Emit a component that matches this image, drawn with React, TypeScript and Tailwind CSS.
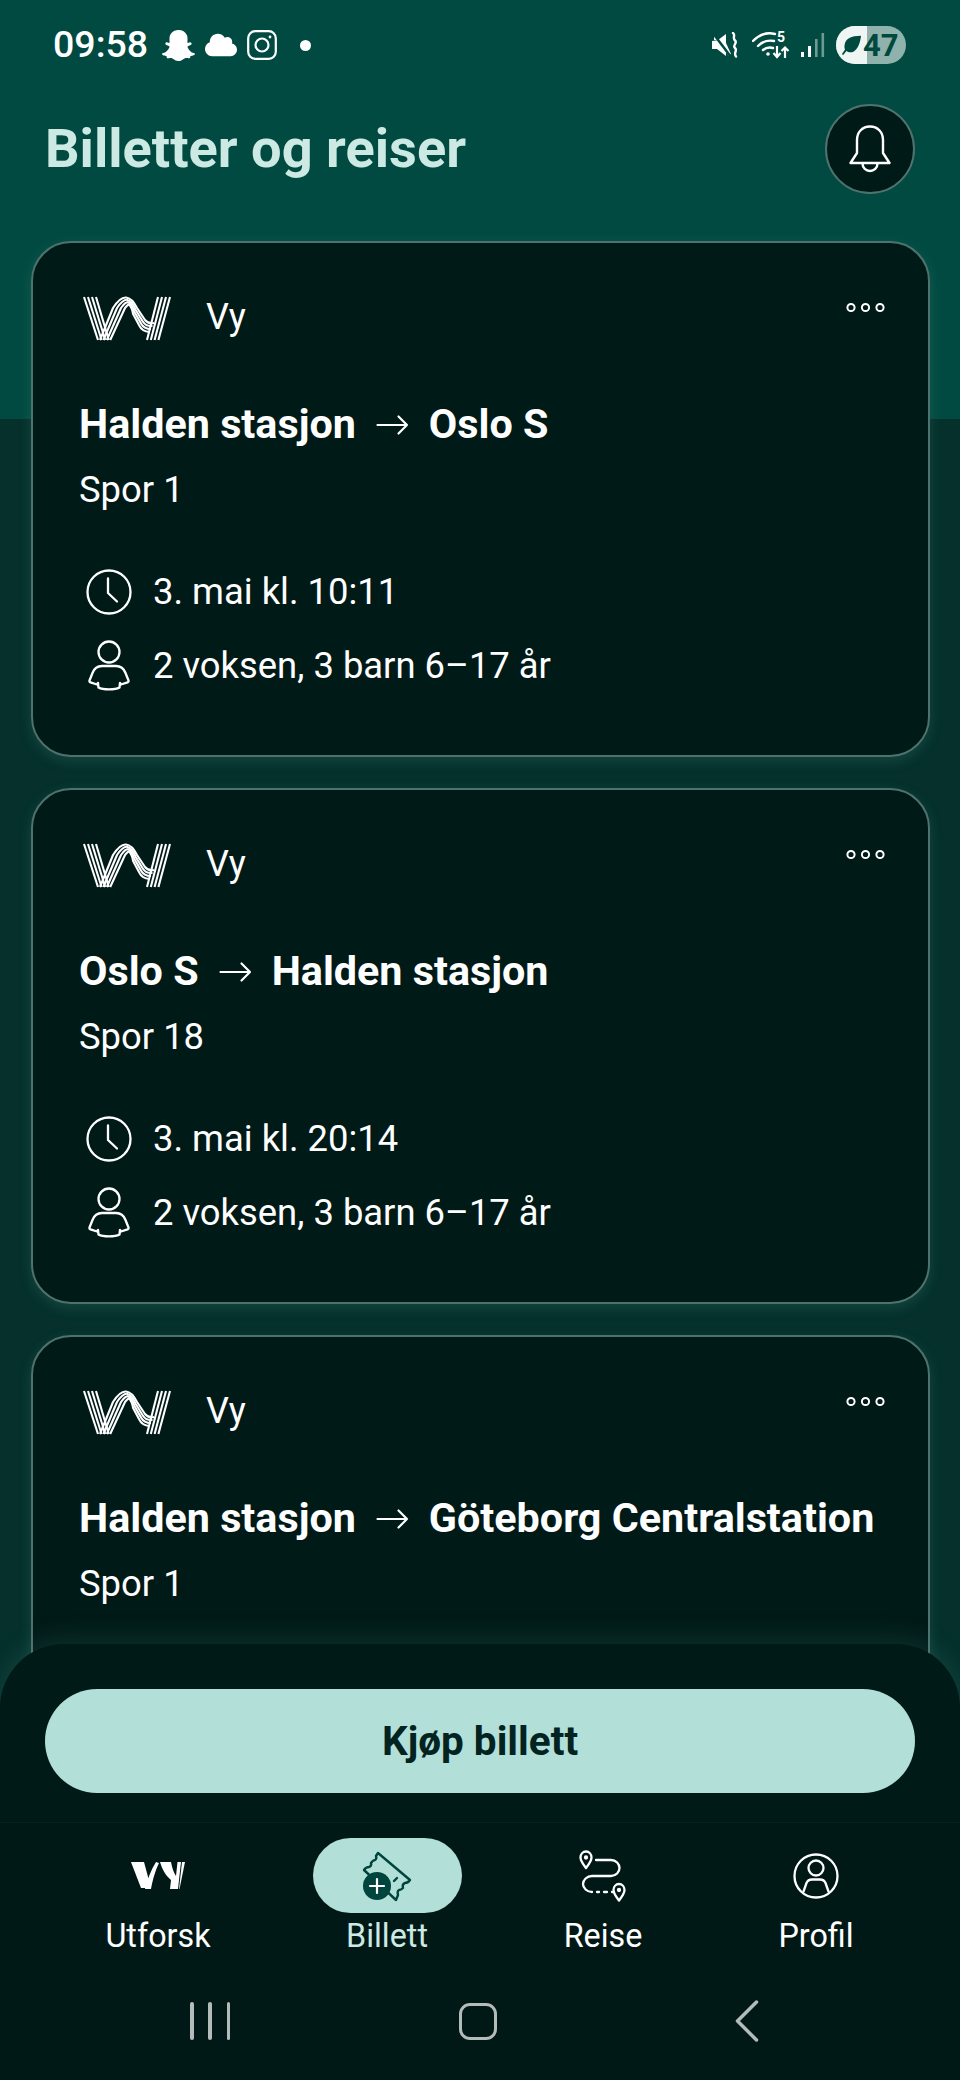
import { FaSnapchatGhost, FaCloud } from "react-icons/fa";

const FONT = "font-['Roboto',sans-serif]";

function VyLogo() {
  const idx = [0, 1, 2, 3];
  return (
    <svg className="ml-[4px]" width="88" height="46" viewBox="0 0 88 46" fill="none" stroke="#fff" strokeWidth="2.1" strokeLinecap="butt" strokeLinejoin="round">
      {idx.map((i) => (
        <path key={`v${i}`} d={`M${1 + 4 * i} 1 L${15 + 3.6 * i} 44`} />
      ))}
      {idx.map((i) => (
        <path key={`w${i}`} d={`M${17 + 3.4 * i} 44 L${30 + 4 * i} 12 Q${37 + 2.7 * i} ${1 + 2.5 * i} ${43 + i} ${1.5 + 2.3 * i} Q${49} ${2 + 3 * i} ${54 - 1.3 * i} ${12 + 2 * i} L${62 - 2 * i} ${24 + 1.7 * i} Q${65 - 2 * i} ${28 + 2.5 * i} ${71 - 1.5 * i} ${27 + 3 * i}`} />
      ))}
      {idx.map((i) => (
        <path key={`y${i}`} d={`M${75 + 4 * i} 1 L${64 + 3.8 * i} 44`} />
      ))}
    </svg>
  );
}

function Clock() {
  return (
    <svg width="46" height="46" viewBox="0 0 46 46" fill="none" stroke="#fff" strokeWidth="2.3" strokeLinecap="round" strokeLinejoin="round">
      <circle cx="23" cy="23" r="21.5" />
      <path d="M22 9.5V24L31 32.5" />
    </svg>
  );
}

function Person() {
  return (
    <svg width="42" height="52" viewBox="0 0 42 52" fill="none" stroke="#fff" strokeWidth="2.3" strokeLinecap="round" strokeLinejoin="round">
      <circle cx="21" cy="12" r="10.5" />
      <path d="M14 26H28C33 26 36 29 37.5 33L40.5 40.5C40.8 41.5 40.4 42 39.5 42.4L33 44.5L32 43L31.5 47.5C27 50 15 50 10.5 47.5L10 43L9 44.5L2.5 42.4C1.6 42 1.2 41.5 1.5 40.5L4.5 33C6 29 9 26 14 26Z" />
    </svg>
  );
}

function Dots() {
  return (
    <svg width="42" height="11" viewBox="0 0 42 11" fill="none" stroke="#fff" strokeWidth="2">
      <circle cx="6" cy="5.5" r="3.6" />
      <circle cx="20.5" cy="5.5" r="3.6" />
      <circle cx="35" cy="5.5" r="3.6" />
    </svg>
  );
}

function Arrow() {
  return (
    <svg width="33" height="22" viewBox="0 0 33 22" fill="none" stroke="#fff" strokeWidth="2.2" strokeLinecap="round" strokeLinejoin="round">
      <path d="M1.5 11H31M22.5 2.5L31 11L22.5 19.5" />
    </svg>
  );
}

function Card({ from, to, track, time }: { from: string; to: string; track: string; time?: string }) {
  return (
    <section className="h-[516px] shrink-0 rounded-[40px] border-2 border-[#4e726d] bg-[#001a18] pl-[46px] pr-[46px] pt-[52px] shadow-[0_4px_14px_rgba(110,190,175,0.16)]">
      <div className="flex h-[48px] items-center">
        <VyLogo />
        <span className="mb-[4px] ml-[35px] text-[36px] leading-none text-white">Vy</span>
        <span className="mb-[24px] ml-auto mr-[-5px]"><Dots /></span>
      </div>
      <div className="mt-[58px] flex h-[48px] items-center whitespace-nowrap text-[41.3px] font-bold leading-none text-white">
        <span>{from}</span>
        <span className="mx-[20px] flex"><Arrow /></span>
        <span>{to}</span>
      </div>
      <div className="mt-[17px] text-[36.4px] leading-[48px] text-white">{track}</div>
      {time && (
        <div className="mt-[53px] flex flex-col gap-[24px]">
          <div className="flex h-[50px] items-center text-[36.4px] text-white">
            <span className="ml-[7px] flex w-[67px]"><Clock /></span>
            {time}
          </div>
          <div className="flex h-[50px] items-center text-[36.4px] text-white">
            <span className="ml-[9px] flex w-[65px]"><Person /></span>
            2 voksen, 3 barn 6–17 år
          </div>
        </div>
      )}
    </section>
  );
}

function NavLogo() {
  return (
    <svg width="54" height="27" viewBox="0 0 54 27" fill="#fff">
      <path d="M0 0H13L20 26H10Z" />
      <path d="M14 27H20C22 16 25 7 28 1L25 0C20 8 16 18 14 27Z" />
      <path d="M29 0H40C41 6 43 11 45 14L46.5 0H50L47 27H39L40 18C35 14 31 7 29 0Z" />
      <path d="M51 0H54L48.5 27H48Z" />
    </svg>
  );
}

function TicketPlus() {
  return (
    <svg width="52" height="52" viewBox="0 0 52 52" fill="none">
      <path d="M17 3L49 30Q47 33 44 33Q41 34 42 38Q40 40 38 40Q36 41 37 45L35 50L3 20Q5 17 8 17Q11 16 10 13Q12 10 14 10Q16 9 15 6Z" stroke="#00453d" strokeWidth="2.4" strokeLinejoin="round" />
      <path d="M33 31L36 28" stroke="#00453d" strokeWidth="2.4" strokeLinecap="round" />
      <circle cx="16" cy="36" r="14" fill="#00453d" />
      <path d="M16 29V43M9 36H23" stroke="#fff" strokeWidth="2.2" strokeLinecap="round" />
    </svg>
  );
}

function RouteIcon() {
  return (
    <svg width="48" height="52" viewBox="0 0 48 52" fill="none" stroke="#fff" strokeWidth="2.3" strokeLinecap="round" strokeLinejoin="round">
      <path d="M7 18C3.5 13.5 1.5 11 1.5 7.5C1.5 4 4 1.5 7 1.5C10 1.5 12.5 4 12.5 7.5C12.5 11 10.5 13.5 7 18Z" />
      <circle cx="7" cy="7.5" r="1" fill="#fff" />
      <path d="M17 10H32C37 10 40.5 14 40.5 18C40.5 22 37 26 32 26H13C8 26 4 30 4 34C4 38 8 42 13 42" />
      <path d="M18 42H20M25 42H28M33 42H35" />
      <path d="M40 50.5C36.5 46 34.5 43.5 34.5 40C34.5 36.5 37 34 40 34C43 34 45.5 36.5 45.5 40C45.5 43.5 43.5 46 40 50.5Z" />
      <circle cx="40" cy="40" r="1" fill="#fff" />
    </svg>
  );
}

function ProfileIcon() {
  return (
    <svg width="46" height="46" viewBox="0 0 46 46" fill="none" stroke="#fff" strokeWidth="2.3" strokeLinecap="round" strokeLinejoin="round">
      <circle cx="23" cy="23" r="21.5" />
      <circle cx="23" cy="15" r="7.5" />
      <path d="M10.5 38.5L13.5 30C14.5 27.5 16.5 26.5 19 26.5H27C29.5 26.5 31.5 27.5 32.5 30L35.5 38.5" />
    </svg>
  );
}

function BellIcon() {
  return (
    <svg width="42" height="48" viewBox="0 0 42 48" fill="none" stroke="#fff" strokeWidth="2.4" strokeLinejoin="round">
      <path d="M1.5 38L8 28V15C8 7 13.5 1.5 21 1.5C28.5 1.5 34 7 34 15V28L40.5 38Z" />
      <path d="M13.5 38.5C13.5 43 17 46 21 46C25 46 28.5 43 28.5 38.5" />
    </svg>
  );
}

function StatusRight() {
  return (
    <div className="flex items-center">
      <svg width="28" height="26" viewBox="0 0 28 26" fill="none">
        <path d="M2 8H6L14 2V11L19 22L16.5 23.5L2 3Z" fill="#fff" />
        <path d="M0 9V17H5L14 24V15L7 8Z" fill="#fff" />
        <path d="M0 0L19 25" stroke="#00493f" strokeWidth="2.5" />
        <path d="M21 1C24 3 20 6 23 8.5C26 11 20 13.5 23 16C26 18.5 21 21 24 24.5" stroke="#fff" strokeWidth="2.4" strokeLinecap="round" />
      </svg>
      <div className="relative ml-[12px] flex">
        <svg width="40" height="28" viewBox="0 0 40 28" fill="none">
          <path d="M1 10C8 3 16 1 23 3M6 15C11 10 17 9 22 10M11 19C14 16.5 18 16 21 17" stroke="#fff" strokeWidth="2.4" strokeLinecap="round" />
          <circle cx="16" cy="23" r="1.8" fill="#fff" />
          <path d="M25 15V25M21.5 22L25 26L28.5 22M33 27V17M29.5 20L33 16.5L36.5 20" stroke="#fff" strokeWidth="2.2" />
        </svg>
        <span className="absolute left-[25px] top-[0px] text-[14px] font-bold leading-[13px] text-white">5</span>
      </div>
      <svg className="ml-[8px]" width="25" height="26" viewBox="0 0 25 26" fill="none">
        <rect x="1" y="20" width="3" height="5" fill="#fff" />
        <rect x="8" y="14" width="3" height="11" fill="#fff" />
        <rect x="15" y="7" width="2.6" height="18" fill="#6f9a93" />
        <rect x="21.5" y="1" width="2.6" height="24" fill="#6f9a93" />
      </svg>
      <div className="relative ml-[11px] flex h-[38px] w-[70px] items-center overflow-hidden rounded-full bg-[#8fb2ac]">
        <span className="absolute inset-y-0 left-0 w-[31px] bg-[#eef5f3]" />
        <svg className="relative ml-[4px] shrink-0" width="22" height="22" viewBox="0 0 24 24" fill="#00493f">
          <path d="M23 2C12 2 6 5 5 12C4.6 14.5 5 16 5.5 17L2 22L3.5 23L7 18.5C9 20 12 20.5 15 19C20 16.5 22 9 23 2Z" />
        </svg>
        <span className="relative ml-[1px] text-[31px] font-bold leading-none text-[#00493f]">47</span>
      </div>
    </div>
  );
}

export default function App() {
  return (
    <div className={`${FONT} relative flex h-[2080px] w-[960px] flex-col overflow-hidden bg-[#05302b]`}>
      <div className="absolute inset-x-0 top-0 h-[419px] bg-[#004a41]" />

      <main className="relative flex min-h-0 flex-1 flex-col overflow-hidden">
        <div className="flex h-[90px] shrink-0 items-center justify-between pl-[53px] pr-[54px]">
          <div className="flex items-center">
            <span className="text-[37.5px] font-medium leading-none text-white">09:58</span>
            <FaSnapchatGhost className="ml-[14px]" color="#fff" size={33} />
            <FaCloud className="ml-[10px]" color="#fff" size={32} />
            <svg className="ml-[10px]" width="30" height="30" viewBox="0 0 30 30" fill="none" stroke="#fff" strokeWidth="2.2">
              <rect x="1.2" y="1.2" width="27.6" height="27.6" rx="7" />
              <circle cx="15" cy="15" r="6.5" />
              <circle cx="23" cy="7" r="1.4" fill="#fff" stroke="none" />
            </svg>
            <span className="ml-[23px] h-[11px] w-[11px] rounded-full bg-white" />
          </div>
          <StatusRight />
        </div>

        <div className="flex h-[90px] shrink-0 items-center justify-between pl-[45px] pr-[45px] pt-[28px]">
          <h1 className="text-[54.2px] font-bold leading-none text-[#cce9e3]">Billetter og reiser</h1>
          <button className="flex h-[90px] w-[90px] items-center justify-center rounded-full border-2 border-[#4e726d] bg-[#001a18]">
            <BellIcon />
          </button>
        </div>

        <div className="ml-[31px] mr-[30px] mt-[61px] flex shrink-0 flex-col gap-[31px]">
          <Card from="Halden stasjon" to="Oslo S" track="Spor 1" time="3. mai kl. 10:11" />
          <Card from="Oslo S" to="Halden stasjon" track="Spor 18" time="3. mai kl. 20:14" />
          <Card from="Halden stasjon" to="Göteborg Centralstation" track="Spor 1" />
        </div>

        <div className="absolute inset-x-0 bottom-0 h-[178px] rounded-t-[64px] bg-[#001a18] px-[45px] pt-[45px] shadow-[0_-6px_24px_rgba(70,150,135,0.18)]">
          <button className="flex h-[104px] w-full items-center justify-center rounded-[52px] bg-[#b2dfd8] text-[40.5px] font-bold text-[#02231f]">
            Kjøp billett
          </button>
        </div>
      </main>

      <nav className="relative h-[258px] shrink-0 border-t border-[#022320] bg-[#001917]">
        <div className="ml-[45px] grid grid-cols-[226px_232px_200px_226px] pt-[15px]">
          <div className="flex flex-col items-center">
            <div className="flex h-[75px] items-center"><NavLogo /></div>
            <span className="mt-[3px] text-[32.3px] leading-[40px] text-white">Utforsk</span>
          </div>
          <div className="flex flex-col items-center">
            <div className="flex h-[75px] w-[149px] items-center justify-center rounded-full bg-[#b2dfd8]"><TicketPlus /></div>
            <span className="mt-[3px] text-[32.3px] leading-[40px] text-[#cce9e3]">Billett</span>
          </div>
          <div className="flex flex-col items-center">
            <div className="flex h-[75px] items-center"><RouteIcon /></div>
            <span className="mt-[3px] text-[32.3px] leading-[40px] text-white">Reise</span>
          </div>
          <div className="flex flex-col items-center">
            <div className="flex h-[75px] items-center"><ProfileIcon /></div>
            <span className="mt-[3px] text-[32.3px] leading-[40px] text-white">Profil</span>
          </div>
        </div>
        <div className="mt-[45px] flex h-[40px] items-center pl-[190px]">
          <div className="flex w-[40px] justify-between">
            <span className="h-[38px] w-[3.5px] rounded-full bg-[#b4bcba]" />
            <span className="h-[38px] w-[3.5px] rounded-full bg-[#b4bcba]" />
            <span className="h-[38px] w-[3.5px] rounded-full bg-[#b4bcba]" />
          </div>
          <span className="ml-[229px] h-[37px] w-[38px] rounded-[11px] border-[3.5px] border-[#b4bcba]" />
          <svg className="ml-[238px]" width="24" height="42" viewBox="0 0 24 42" fill="none" stroke="#b4bcba" strokeWidth="3.5" strokeLinecap="round" strokeLinejoin="round">
            <path d="M21.5 2L2.5 21L21.5 40" />
          </svg>
        </div>
      </nav>
    </div>
  );
}
